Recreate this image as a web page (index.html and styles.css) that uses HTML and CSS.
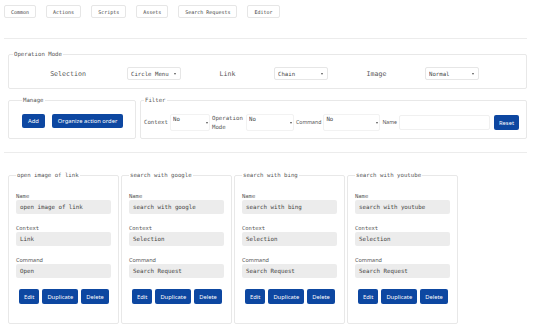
FILE: index.html
```html
<!DOCTYPE html>
<html lang="en">
<head>
  <meta charset="UTF-8" />
  <title>Options</title>
  <link rel="stylesheet" href="styles.css">
</head>
<body>

  <nav class="tabs">
    <button class="tab">Common</button>
    <button class="tab">Actions</button>
    <button class="tab">Scripts</button>
    <button class="tab">Assets</button>
    <button class="tab">Search Requests</button>
    <button class="tab">Editor</button>
  </nav>

  <hr class="rule">

  <!-- Operation mode -->
  <fieldset class="panel mode">
    <legend>Operation Mode</legend>
    <div class="mode-grid">
      <span class="mode-label">Selection</span>
      <div class="select"><select><option>Circle Menu</option></select></div>
      <span class="mode-label">Link</span>
      <div class="select"><select><option>Chain</option></select></div>
      <span class="mode-label">Image</span>
      <div class="select"><select><option>Normal</option></select></div>
    </div>
  </fieldset>

  <div class="tools">
    <fieldset class="panel manage">
      <legend>Manage</legend>
      <div class="btn-row">
        <button class="btn">Add</button>
        <button class="btn">Organize action order</button>
      </div>
    </fieldset>

    <fieldset class="panel filter">
      <legend>Filter</legend>
      <div class="filter-row">
        <span class="f-label">Context</span>
        <div class="select tall w-ctx"><select><option>No</option></select></div>
        <span class="f-label wrap">Operation Mode</span>
        <div class="select tall w-mode"><select><option>No</option></select></div>
        <span class="f-label sans">Command</span>
        <div class="select tall w-cmd"><select><option>No</option></select></div>
        <span class="f-label sans">Name</span>
        <input class="name-input" type="text">
        <button class="btn reset">Reset</button>
      </div>
    </fieldset>
  </div>

  <hr class="rule rule-low">

  <div class="cards">
    <fieldset class="panel card">
      <legend>open image of link</legend>
      <label>Name</label>
      <div class="field">open image of link</div>
      <label>Context</label>
      <div class="field">Link</div>
      <label class="sans">Command</label>
      <div class="field">Open</div>
      <div class="card-btns">
        <button class="btn">Edit</button>
        <button class="btn">Duplicate</button>
        <button class="btn">Delete</button>
      </div>
    </fieldset>

    <fieldset class="panel card">
      <legend>search with google</legend>
      <label>Name</label>
      <div class="field">search with google</div>
      <label>Context</label>
      <div class="field">Selection</div>
      <label class="sans">Command</label>
      <div class="field">Search Request</div>
      <div class="card-btns">
        <button class="btn">Edit</button>
        <button class="btn">Duplicate</button>
        <button class="btn">Delete</button>
      </div>
    </fieldset>

    <fieldset class="panel card">
      <legend>search with bing</legend>
      <label>Name</label>
      <div class="field">search with bing</div>
      <label>Context</label>
      <div class="field">Selection</div>
      <label class="sans">Command</label>
      <div class="field">Search Request</div>
      <div class="card-btns">
        <button class="btn">Edit</button>
        <button class="btn">Duplicate</button>
        <button class="btn">Delete</button>
      </div>
    </fieldset>

    <fieldset class="panel card">
      <legend>search with youtube</legend>
      <label>Name</label>
      <div class="field">search with youtube</div>
      <label>Context</label>
      <div class="field">Selection</div>
      <label class="sans">Command</label>
      <div class="field">Search Request</div>
      <div class="card-btns">
        <button class="btn">Edit</button>
        <button class="btn">Duplicate</button>
        <button class="btn">Delete</button>
      </div>
    </fieldset>
  </div>

</body>
</html>
```

FILE: styles.css
```css
body {
  font-family: 'DejaVu Sans Mono', monospace;
  font-size: 5.7px;
  color: #555;
  background: #fff;
  margin: 0;
  padding: 0 6px 0 4px;
}

.sans {
  font-family: 'Noto Sans', sans-serif;
}

/* Tabs */
.tabs {
  display: flex;
  gap: 10px;
  padding-top: 5px;
}

.tab {
  font-family: 'DejaVu Sans Mono', monospace;
  font-size: 5px;
  color: #444;
  background: #fff;
  border: 1px solid #e6e6e6;
  border-radius: 2px;
  height: 13px;
  padding: 0 6px;
}

.rule {
  border: 0;
  border-top: 1px solid #ececec;
  margin: 20px 0 11px;
}

.rule-low {
  margin: 13px 0 18px;
}

/* Fieldsets */
.panel {
  border: 1px solid #e8e8e8;
  border-radius: 2px;
  margin: 0 0 0 4px;
  padding: 0 6px;
  min-width: 0;
}

.panel legend {
  padding: 0 1px;
  line-height: 8px;
  color: #555;
}

.mode {
  padding: 9px 6px 8px 4px;
}

.mode-grid {
  display: grid;
  grid-template-columns: 110px 54px 85px 54px 89px 54px;
  column-gap: 4px;
  align-items: center;
}

.mode-label {
  text-align: center;
  font-size: 6.6px;
}

/* Selects */
.select {
  position: relative;
  flex-shrink: 0;
}

.select select {
  appearance: none;
  width: 100%;
  height: 13px;
  font-family: 'DejaVu Sans Mono', monospace;
  font-size: 5.7px;
  color: #444;
  background: #fff;
  border: 1px solid #e6e6e6;
  border-radius: 2px;
  padding: 0 3px;
}

.select::after {
  content: '';
  position: absolute;
  right: 5px;
  top: 5.5px;
  border-left: 1.5px solid transparent;
  border-right: 1.5px solid transparent;
  border-top: 2px solid #555;
}

.select.tall select {
  height: 17px;
  padding: 0 2px 7px;
  border-color: #f2f2f2;
}

.select.tall::after {
  top: 8px;
  right: 2px;
}

/* Manage / Filter */
.tools {
  display: flex;
  margin-top: 7px;
}

.manage {
  width: 128px;
  padding: 10px 6px 8px 13px;
  box-sizing: border-box;
  margin-left: 4px;
}

.filter {
  flex: 1;
  padding: 10px 7px 7px 3px;
}

.btn-row {
  display: flex;
  gap: 7px;
}

.btn {
  font-family: 'Noto Sans', sans-serif;
  font-size: 5.8px;
  color: #fff;
  background: #0d47a1;
  border: 0;
  border-radius: 2px;
  height: 14px;
  padding: 0 6px;
}

.filter-row {
  display: flex;
  align-items: center;
  gap: 2px;
}

.f-label {
  line-height: 8.5px;
  flex-shrink: 0;
}

.f-label.sans {
  font-size: 5.2px;
}

.f-label.wrap {
  width: 32px;
}

.w-ctx { width: 40px; }
.w-mode { width: 48px; }
.w-cmd { width: 57px; }

.name-input {
  flex: 1;
  width: 0;
  min-width: 0;
  height: 15px;
  border: 1px solid #f0f0f0;
  border-radius: 2px;
  margin-right: 2px;
  box-sizing: border-box;
}

.reset {
  height: 15px;
  padding: 0 5px;
}

/* Action cards */
.cards {
  display: flex;
  gap: 2px;
  margin-left: 4px;
}

.card {
  width: 111px;
  height: 153px;
  box-sizing: border-box;
  margin: 0;
  padding: 14px 7px 0 7px;
  display: flex;
  flex-direction: column;
}

.card label {
  font-size: 5.5px;
  color: #555;
  line-height: 7px;
}

.field {
  background: #ececec;
  border-radius: 2px;
  height: 14px;
  line-height: 14px;
  padding: 0 4px;
  margin: 0 0 11px;
  font-size: 5.8px;
  color: #444;
}

.card-btns {
  display: flex;
  gap: 3px;
  margin-top: 0;
  padding-left: 3px;
}

.card-btns .btn {
  height: 15px;
  padding: 0 5px;
}
```
